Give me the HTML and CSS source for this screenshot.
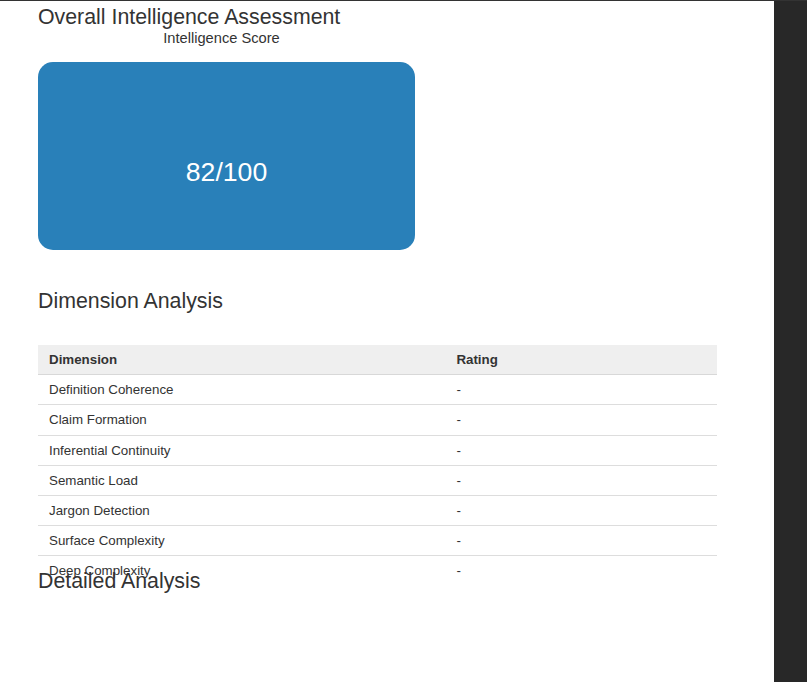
FILE: index.html
```html
<!DOCTYPE html>
<html>
<head>
<meta charset="utf-8">
<link rel="stylesheet" href="styles.css">
</head>
<body>
<div class="page">
  <main class="main">
    <h1 class="heading title">Overall Intelligence Assessment</h1>
    <div class="score-card">
      <div class="score-label">Intelligence Score</div>
      <div class="score-box">82/100</div>
    </div>
    <h2 class="heading section">Dimension Analysis</h2>
    <div class="table-wrap">
      <table class="dims">
        <colgroup><col class="c1"><col class="c2"></colgroup>
        <thead>
          <tr><th>Dimension</th><th>Rating</th></tr>
        </thead>
        <tbody>
          <tr><td>Definition Coherence</td><td>-</td></tr>
          <tr><td>Claim Formation</td><td>-</td></tr>
          <tr><td>Inferential Continuity</td><td>-</td></tr>
          <tr><td>Semantic Load</td><td>-</td></tr>
          <tr><td>Jargon Detection</td><td>-</td></tr>
          <tr><td>Surface Complexity</td><td>-</td></tr>
          <tr><td>Deep Complexity</td><td>-</td></tr>
        </tbody>
      </table>
    </div>
    <h2 class="heading detailed">Detailed Analysis</h2>
  </main>
  <aside class="side"></aside>
</div>
</body>
</html>
```

FILE: styles.css
```css
html, body {
  margin: 0;
  padding: 0;
  height: 100%;
}
body {
  font-family: "Liberation Sans", Arial, sans-serif;
  font-size: 13.33px;
  color: #333;
  background: #fff;
  overflow: hidden;
}
.page {
  display: flex;
  height: 682px;
  border-top: 1px solid #333;
  box-sizing: border-box;
}
.main {
  flex: 1;
  padding: 4px 0 0 38px;
  background: #fff;
}
.side {
  width: 33px;
  background: #282828;
}
.heading {
  margin: 0;
  font-weight: normal;
  font-size: 21.33px;
  line-height: 24px;
  color: #333;
}
.score-card {
  width: 377px;
}
.score-label {
  width: 367px;
  text-align: center;
  font-size: 14.67px;
  line-height: 18px;
}
.score-box {
  margin-top: 15px;
  height: 188px;
  box-sizing: border-box;
  padding-top: 32px;
  border-radius: 15px;
  background: #2980b9;
  color: #fff;
  font-size: 26.67px;
  display: flex;
  align-items: center;
  justify-content: center;
}
.section {
  margin-top: 39px;
}
.table-wrap {
  margin-top: 32px;
  height: 224px;
}
.dims {
  width: 679px;
  border-collapse: collapse;
  table-layout: fixed;
  font-size: 13.33px;
}
.dims .c1 { width: 60%; }
.dims .c2 { width: 40%; }
.dims th,
.dims td {
  text-align: left;
  padding: 7px 11px;
  line-height: 15.2px;
  border-bottom: 1px solid #ddd;
}
.dims th {
  background: #efefef;
  font-weight: bold;
  border-bottom-color: #d8d8d8;
}
.dims tbody tr:last-child td {
  border-bottom: none;
}
```
